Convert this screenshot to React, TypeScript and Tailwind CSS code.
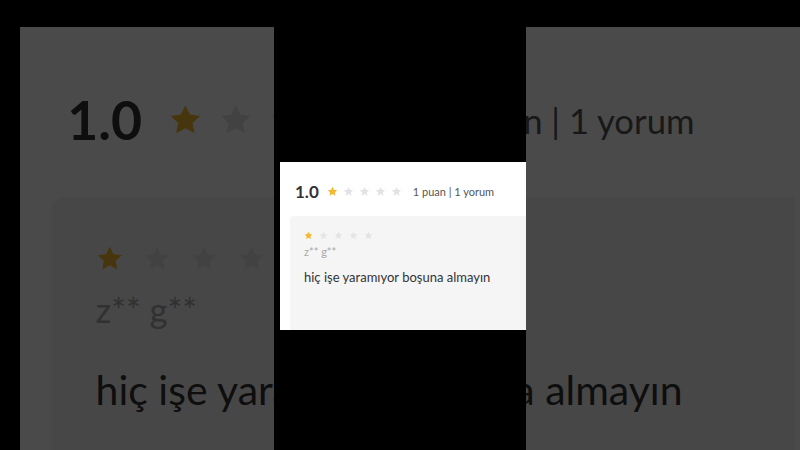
import React from "react";

function Star({ filled, size }: { filled: boolean; size: number }) {
  return (
    <svg
      viewBox="0 0 24 24"
      width={size}
      height={size}
      className={filled ? "fill-[#f5b82e]" : "fill-[#e4e4e4]"}
    >
      <path
        d="M12 1.8l3.1 6.5 7.1.9-5.2 4.9 1.4 7.1L12 17.7l-6.4 3.5 1.4-7.1-5.2-4.9 7.1-.9z"
        strokeLinejoin="round"
      />
    </svg>
  );
}

function Stars({ value, size, gap }: { value: number; size: number; gap: string }) {
  return (
    <div className={`flex ${gap}`}>
      {[1, 2, 3, 4, 5].map(i => (
        <Star key={i} filled={i <= value} size={size} />
      ))}
    </div>
  );
}

function ReviewCard() {
  return (
    <div className="w-[246px] h-[168px] bg-white overflow-hidden font-['Lato',sans-serif]">
      <div className="flex items-center h-[20px] mt-[19px] pl-[15px]">
        <span className="text-[17px] leading-none font-bold text-[#333]">1.0</span>
        <div className="ml-[8px]">
          <Stars value={1} size={11} gap="gap-[5px]" />
        </div>
        <span className="ml-[11px] text-[11px] leading-none text-[#555]">1 puan | 1 yorum</span>
      </div>

      <div className="mt-[15px] ml-[10px] h-[200px] bg-[#f5f5f5] rounded-tl-[4px] pt-[15px] pl-[14px]">
        <Stars value={1} size={9} gap="gap-[6px]" />
        <p className="mt-[6px] text-[11px] leading-[12px] text-[#a8a8a8]">z** g**</p>
        <p className="mt-[10px] text-[13px] leading-[18px] text-[#333]">hiç işe yaramıyor boşuna almayın</p>
      </div>
    </div>
  );
}

export default function App() {
  return (
    <div className="relative w-[800px] h-[450px] bg-black overflow-hidden">
      {/* blurred, zoomed video backdrop */}
      <div className="absolute left-[20px] top-[27px] right-0 bottom-0 overflow-hidden bg-white">
        <div className="origin-top-left scale-[3.15]">
          <ReviewCard />
        </div>
        <div className="absolute inset-0 bg-black/[0.71]" />
      </div>

      {/* center column */}
      <div className="absolute left-[274px] top-[27px] w-[252px] bottom-0 bg-black pt-[135px] pl-[6px]">
        <ReviewCard />
      </div>
    </div>
  );
}
